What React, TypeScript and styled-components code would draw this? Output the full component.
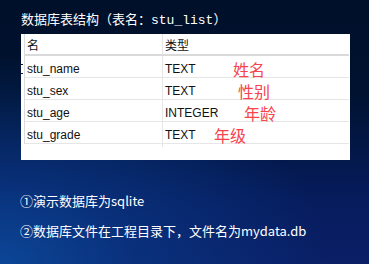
import styled, {createGlobalStyle} from "styled-components";
import {FC} from "react";

const GlobalStyle = createGlobalStyle`
    html, body {
        margin: 0;
        padding: 0;
    }
    body {
        width: 369px;
        height: 264px;
        overflow: hidden;
    }
`;

const Slide = styled.div`
    width: 369px;
    height: 264px;
    box-sizing: border-box;
    padding: 9px 0 0 21px;
    background:
        radial-gradient(ellipse 330px 210px at 0% 100%, #0b4696 0%, rgba(10, 60, 140, 0.6) 40%, rgba(8, 30, 90, 0) 100%),
        linear-gradient(180deg, #00102a 0%, #001230 35%, #061c5c 75%, #0a1f66 100%);
    font-family: "Liberation Sans", "Noto Sans CJK SC", sans-serif;
    color: white;
`;

const Title = styled.div`
    font-family: "Noto Sans CJK SC", sans-serif;
    font-size: 13px;
    line-height: 20px;
    height: 20px;
    -webkit-font-smoothing: none;
`;

const Mono = styled.span`
    font-family: "Liberation Mono", monospace;
    font-size: 13px;
`;

const Panel = styled.div`
    margin-top: 5px;
    width: 329px;
    height: 126px;
    background: #ffffff;
    position: relative;
`;

const Marker = styled.div`
    position: absolute;
    left: -1px;
    top: 30px;
    width: 3px;
    height: 10px;
    border-left: 1px solid #0a1a3a;
    border-top: 1px solid #0a1a3a;
    border-bottom: 1px solid #0a1a3a;
    box-sizing: border-box;
`;

const Table = styled.div`
    margin-left: 3px;
    width: 324px;
    border-left: 1px solid #dcdcdc;
`;

const Row = styled.div<{ $head?: boolean }>`
    display: grid;
    grid-template-columns: 138px 1fr;
    height: 22px;
    box-sizing: border-box;
    border-bottom: ${p => (p.$head ? "2px solid #dadada" : "1px solid #e6e6e6")};
    color: #111;
    font-size: 12px;
    font-family: "Liberation Sans", "Noto Sans CJK SC", sans-serif;
`;

const Cell = styled.div<{ $first?: boolean }>`
    display: flex;
    align-items: center;
    padding-left: 2px;
    border-right: ${p => (p.$first ? "1px solid #e6e6e6" : "none")};
    white-space: nowrap;
`;

const TypeName = styled.span`
    width: 34px;
`;

const Note = styled.span<{ $x: number }>`
    color: #f6434c;
    font-family: "Noto Sans CJK SC", sans-serif;
    font-size: 16px;
    margin-left: ${p => p.$x}px;
    margin-top: 1px;
`;

const Notes = styled.div`
    margin-top: 31px;
    display: flex;
    flex-direction: column;
    gap: 11px;
    font-family: "Noto Sans CJK SC", sans-serif;
    font-size: 13px;
    line-height: 19px;
    margin-left: -1px;
`;

const fields = [
    {name: "stu_name", type: "TEXT", note: "姓名", x: 34},
    {name: "stu_sex", type: "TEXT", note: "性别", x: 39},
    {name: "stu_age", type: "INTEGER", note: "年龄", x: 45},
    {name: "stu_grade", type: "TEXT", note: "年级", x: 15},
];

const App: FC = () => {
    return (
        <Slide>
            <GlobalStyle/>
            <Title>数据库表结构（表名：<Mono>stu_list</Mono>）</Title>
            <Panel>
                <Marker/>
                <Table>
                    <Row $head>
                        <Cell $first>名</Cell>
                        <Cell>类型</Cell>
                    </Row>
                    {fields.map(f => (
                        <Row key={f.name}>
                            <Cell $first>{f.name}</Cell>
                            <Cell>
                                <TypeName>{f.type}</TypeName>
                                <Note $x={f.x}>{f.note}</Note>
                            </Cell>
                        </Row>
                    ))}
                </Table>
            </Panel>
            <Notes>
                <div>①演示数据库为sqlite</div>
                <div>②数据库文件在工程目录下，文件名为mydata.db</div>
            </Notes>
        </Slide>
    );
};

export default App;
